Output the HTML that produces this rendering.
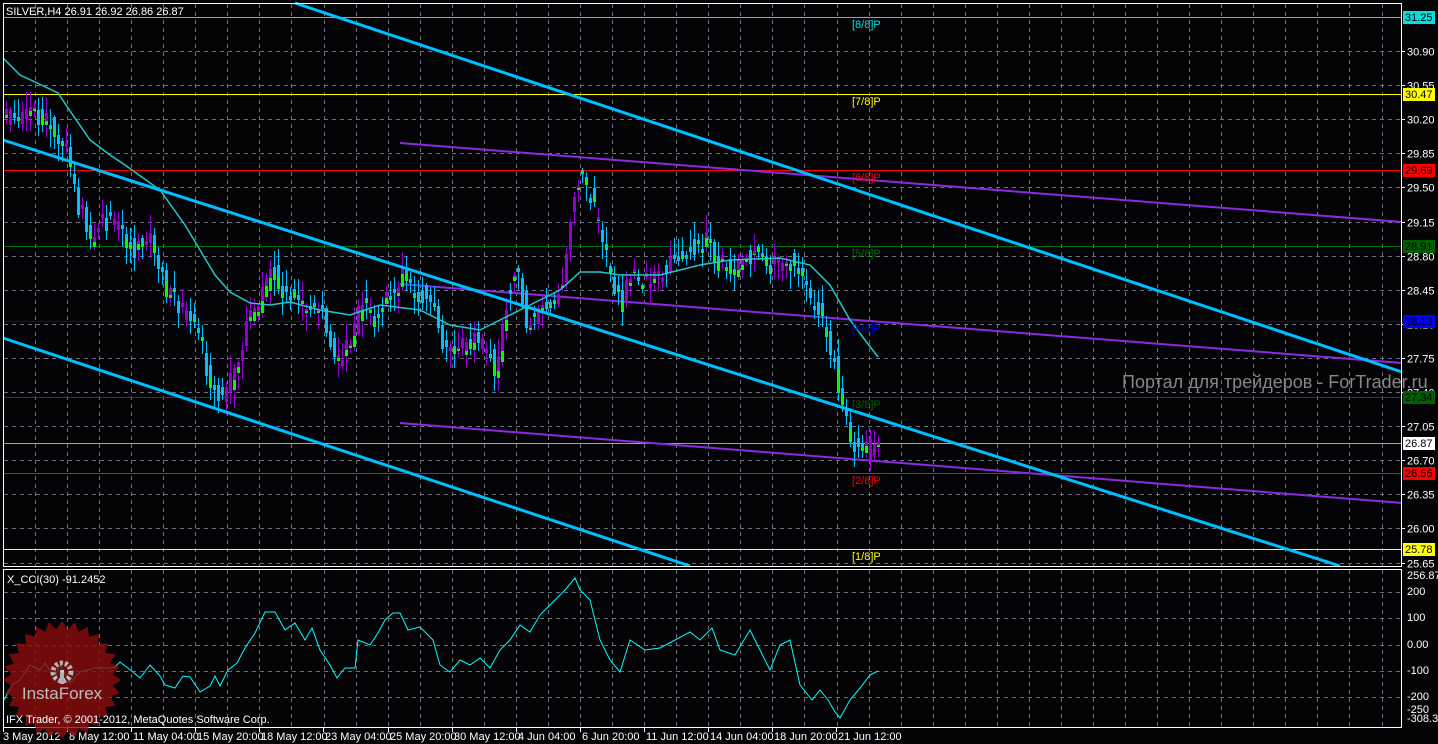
<!DOCTYPE html>
<html><head><meta charset="utf-8"><style>
html,body{margin:0;padding:0;background:#000;width:1438px;height:744px;overflow:hidden}
svg{display:block}
text{font-family:"Liberation Sans",sans-serif;font-size:11px}
</style></head><body>
<svg id="s" width="1438" height="744" xmlns="http://www.w3.org/2000/svg">
<rect width="1438" height="744" fill="#040407"/>
<g id="grid"></g>
<line x1="3" y1="17.5" x2="1402" y2="17.5" stroke="#00e0e0"/>
<line x1="3" y1="94.5" x2="1402" y2="94.5" stroke="#ffff00"/>
<line x1="3" y1="170.5" x2="1402" y2="170.5" stroke="#ff0000"/>
<line x1="3" y1="246.5" x2="1402" y2="246.5" stroke="#007000"/>
<line x1="3" y1="321.5" x2="1402" y2="321.5" stroke="#0000ff"/>
<line x1="3" y1="397.5" x2="1402" y2="397.5" stroke="#006000"/>
<line x1="3" y1="443.5" x2="1402" y2="443.5" stroke="#a0a0a8"/>
<line x1="3" y1="473.5" x2="1402" y2="473.5" stroke="#ff0000"/>
<line x1="3" y1="549.5" x2="1402" y2="549.5" stroke="#ffff00"/>
<line x1="400" y1="143" x2="1402" y2="222" stroke="#8a2be2" stroke-width="2"/>
<line x1="400" y1="284" x2="1402" y2="363" stroke="#8a2be2" stroke-width="2"/>
<line x1="400" y1="423" x2="1402" y2="503" stroke="#8a2be2" stroke-width="2"/>
<path id="wdn" fill="none" stroke="#00bfff" stroke-width="1"/>
<path id="wup" fill="none" stroke="#9400d3" stroke-width="1"/>
<path id="bdn" fill="#00bfff"/>
<path id="bup" fill="#9400d3"/>
<path id="bgr" fill="#00ff00"/>
<polyline id="ma" fill="none" stroke="#20c8c8" stroke-width="1.5"/>
<line x1="295" y1="3" x2="1402" y2="372" stroke="#00bfff" stroke-width="3"/>
<line x1="3" y1="140" x2="1340" y2="566" stroke="#00bfff" stroke-width="3"/>
<line x1="3" y1="338" x2="690" y2="566" stroke="#00bfff" stroke-width="3"/>
<text x="1122" y="388" fill="#8a8585" style="font-size:18px">Портал для трейдеров - ForTrader.ru</text>
<g style="font-size:11px">
<text x="852" y="28" fill="#00e0e0">[8/8]P</text>
<text x="852" y="105" fill="#ffff00">[7/8]P</text>
<text x="852" y="181" fill="#ff0000">[6/8]P</text>
<text x="852" y="257" fill="#007000">[5/8]P</text>
<text x="852" y="332" fill="#0000ff">[4/8]P</text>
<text x="852" y="408" fill="#006000">[3/8]P</text>
<text x="852" y="484" fill="#ff0000">[2/8]P</text>
<text x="852" y="560" fill="#ffff00">[1/8]P</text>
</g>
<rect x="3.5" y="3.5" width="1398" height="563" fill="none" stroke="#fff"/>
<rect x="3.5" y="569.5" width="1398" height="158" fill="none" stroke="#fff"/>
<g id="axis"></g>
<text x="6" y="15" fill="#fff">SILVER,H4  26.91 26.92 26.86 26.87</text>
<polyline id="cci" fill="none" stroke="#00ffff" stroke-width="1"/>
<g opacity="0.8">
<polygon id="star" fill="#8b0c0c"/>
<circle cx="62" cy="672" r="9" fill="none" stroke="#ddd" stroke-width="5" stroke-dasharray="3 2"/>
<rect x="60" y="670" width="4" height="14" fill="#ddd"/>
<text x="62" y="699" fill="#e8e8e8" text-anchor="middle" style="font-size:17px">InstaForex</text>
</g>
<text x="7" y="583" fill="#fff">X_CCI(30) -91.2452</text>
<text x="6" y="723" fill="#fff">IFX Trader, © 2001-2012, MetaQuotes Software Corp.</text>
</svg>
<script>
(function(){
var NS="http://www.w3.org/2000/svg";
function el(p,t,a,tx){var e=document.createElementNS(NS,t);for(var k in a)e.setAttribute(k,a[k]);if(tx!==undefined)e.textContent=tx;document.getElementById(p).appendChild(e);return e;}
for(var i=0;i<44;i++){var gx=Math.round(35+i*32.06)+.5;if(gx>1400)break;
 el('grid','line',{x1:gx,y1:4,x2:gx,y2:566,stroke:'#6a7280','stroke-dasharray':'4 4'});
 el('grid','line',{x1:gx,y1:570,x2:gx,y2:727,stroke:'#6a7280','stroke-dasharray':'4 4'});}
var pl=["30.90","30.55","30.20","29.85","29.50","29.15","28.80","28.45","28.10","27.75","27.40","27.05","26.70","26.35","26.00","25.65"];
for(var k=0;k<16;k++){var gy=Math.round(51+k*34.1)+.5;
 el('grid','line',{x1:4,y1:gy,x2:1401,y2:gy,stroke:'#6a7280','stroke-dasharray':'4 4'});
 el('axis','line',{x1:1402,y1:gy,x2:1405,y2:gy,stroke:'#fff'});
 el('axis','text',{x:1407,y:gy+4,fill:'#fff'},pl[k]);}
[592,618,645,671,697].forEach(function(y){el('grid','line',{x1:4,y1:y+.5,x2:1401,y2:y+.5,stroke:'#6a7280','stroke-dasharray':'4 4'});});
[["256.870",579],["200",595],["100",621],["0.00",648],["-100",674],["-200",700],["-250",713],["-308.349",722]].forEach(function(a){el('axis','text',{x:1407,y:a[1],fill:'#fff'},a[0]);});
[["31.25",17,"#00e0e0"],["30.47",94,"#ffff00"],["29.69",170,"#ff0000"],["28.91",246,"#006000"],["28.13",321,"#0000ff"],["27.34",397,"#006000"],["26.87",443,"#fff"],["26.56",473,"#ff0000"],["25.78",549,"#ffff00"]].forEach(function(a){
 el('axis','rect',{x:1403,y:a[1]-6,width:32,height:13,fill:a[2]});el('axis','text',{x:1405,y:a[1]+4,fill:'#000'},a[0]);});
var d=["3 May 2012","8 May 12:00","11 May 04:00","15 May 20:00","18 May 12:00","23 May 04:00","25 May 20:00","30 May 12:00","4 Jun 04:00","6 Jun 20:00","11 Jun 12:00","14 Jun 04:00","18 Jun 20:00","21 Jun 12:00"];
d.forEach(function(t,i){var dx=i==0?3:Math.round(67+(i-1)*64.12);el('axis','line',{x1:dx+.5,y1:728,x2:dx+.5,y2:732,stroke:'#fff'});el('axis','text',{x:dx+(i==0?0:2),y:740,fill:'#fff'},t);});
function interp(pts,q){if(q<=pts[0][0])return pts[0][1];for(var i=1;i<pts.length;i++){if(q<=pts[i][0]){var a=pts[i-1],b=pts[i];return a[1]+(b[1]-a[1])*(q-a[0])/(b[0]-a[0]);}}return pts[pts.length-1][1];}
var P=[[5,120],[30,115],[50,125],[65,150],[75,200],[90,240],[100,220],[115,225],[130,250],[150,240],[165,290],[180,310],[195,330],[210,385],[220,395],[235,370],[245,320],[260,300],[270,270],[285,295],[300,300],[320,310],[335,360],[345,350],[360,300],[375,320],[390,290],[400,275],[415,290],[430,300],[440,345],[455,350],[470,340],[485,350],[495,375],[505,300],[515,270],[525,320],[545,310],[560,280],[570,210],[578,170],[590,200],[600,230],[610,280],[620,310],[630,270],[645,280],[660,275],[675,250],[690,245],[705,240],[715,260],[730,270],[750,255],[770,265],[790,260],[805,290],[820,320],[830,350],[840,400],[850,440],[865,450],[878,445]];
var seed=12345;function rnd(){seed=(seed*9301+49297)%233280;return seed/233280;}
var wd="",wu="",bd="",bu="",bg="";
for(var cx=5;cx<=878;cx+=4){var c=interp(P,cx),p=interp(P,cx-4);var o=p+(rnd()-.5)*22,cl=c+(rnd()-.5)*22;
 var up=cl<o;var bt=Math.round(Math.min(o,cl)),bb=Math.round(Math.max(o,cl));if(bb-bt<4)bb=bt+4;
 var hi=Math.round(bt-rnd()*16-2),lo=Math.round(bb+rnd()*16+2);
 var w="M"+(cx+1.5)+" "+hi+"V"+lo;var b="M"+cx+" "+bt+"h3V"+bb+"h-3Z";
 if(up){wu+=w;bu+=b;}else{wd+=w;bd+=b;}
 if(rnd()<.5){var gh=Math.round((bb-bt)*(.3+rnd()*.4));if(gh>0)bg+="M"+cx+" "+(bb-gh)+"h3V"+bb+"h-3Z";}}
document.getElementById('wdn').setAttribute('d',wd);document.getElementById('wup').setAttribute('d',wu);
document.getElementById('bdn').setAttribute('d',bd);document.getElementById('bup').setAttribute('d',bu);
document.getElementById('bgr').setAttribute('d',bg);
document.getElementById('ma').setAttribute('points',"3,58 20,75 35,82 58,93 68,108 90,140 110,155 125,165 160,190 185,225 200,250 215,275 230,292 250,303 270,305 290,302 320,310 350,315 380,305 420,310 450,325 480,330 500,320 530,305 560,290 580,272 600,272 620,275 660,275 700,265 730,260 780,258 810,265 830,285 850,320 865,340 878,357");
document.getElementById('cci').setAttribute('points',"4,700 12,685 20,680 30,665 40,670 45,663 55,678 60,665 70,683 80,672 95,668 110,668 115,667 120,662 133,672 140,678 150,665 160,676 165,685 175,688 183,676 190,677 200,692 210,686 215,676 220,686 228,670 237,663 245,648 255,633 265,612 275,612 285,630 295,623 305,640 312,628 320,650 330,665 337,678 345,668 355,668 358,640 370,645 378,633 385,620 393,613 400,613 408,630 420,627 433,640 440,665 450,672 460,660 470,665 480,658 490,668 500,650 510,640 520,625 530,632 540,615 550,605 565,590 575,578 580,590 590,600 600,640 610,660 620,672 630,640 645,650 660,648 675,640 690,632 700,640 712,628 720,650 735,655 750,630 760,650 770,670 780,645 790,640 800,685 812,700 820,690 828,700 835,712 840,718 850,700 860,688 870,675 878,671");
var s=[],n=28;for(var i=0;i<2*n;i++){var r=i%2?51:59,a=Math.PI*i/n;s.push((62+r*Math.cos(a)).toFixed(1)+","+(680+r*Math.sin(a)).toFixed(1));}
document.getElementById('star').setAttribute('points',s.join(' '));
})();
</script>
</body></html>
